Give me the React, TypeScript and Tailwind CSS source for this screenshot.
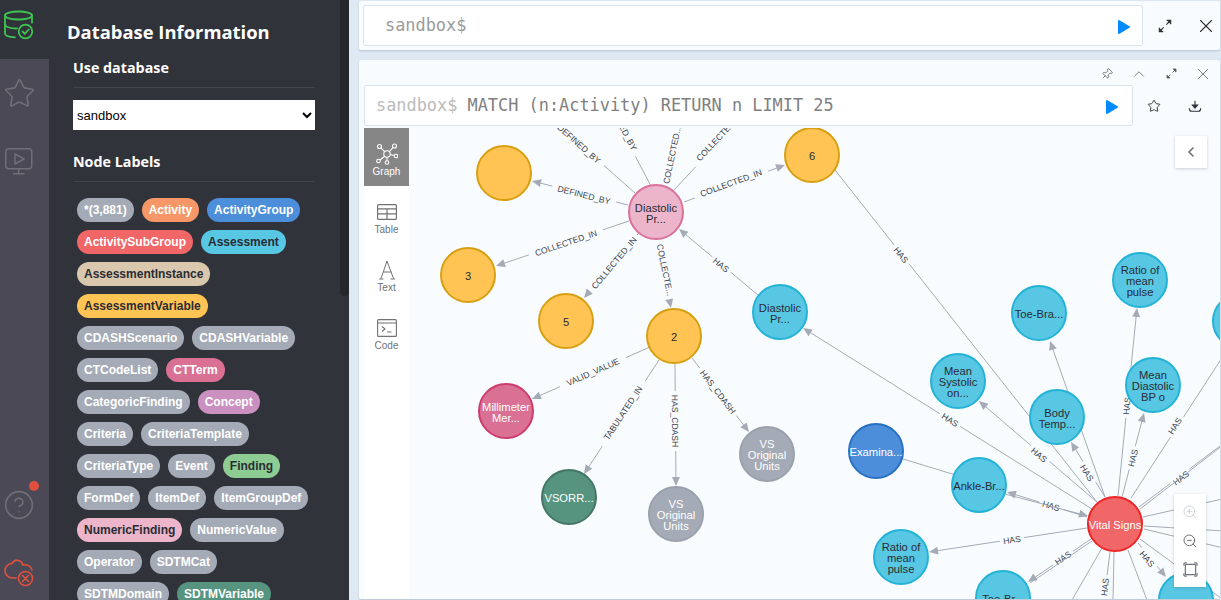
import { ChevronLeft, ChevronUp, CircleHelp, Pin, Star, X, ZoomIn, ZoomOut } from "lucide-react";

const GRAY = { bg: "bg-[#a5abb6]", text: "text-white" };

const TAGS = [
  { name: "*(3,881)", ...GRAY },
  { name: "Activity", bg: "bg-[#f79767]", text: "text-white" },
  { name: "ActivityGroup", bg: "bg-[#4c8eda]", text: "text-white" },
  { name: "ActivitySubGroup", bg: "bg-[#f16667]", text: "text-white" },
  { name: "Assessment", bg: "bg-[#57c7e3]", text: "text-[#2a2c34]" },
  { name: "AssessmentInstance", bg: "bg-[#d9c8ae]", text: "text-[#2a2c34]" },
  { name: "AssessmentVariable", bg: "bg-[#ffc454]", text: "text-[#2a2c34]" },
  { name: "CDASHScenario", ...GRAY },
  { name: "CDASHVariable", ...GRAY },
  { name: "CTCodeList", ...GRAY },
  { name: "CTTerm", bg: "bg-[#da7194]", text: "text-white" },
  { name: "CategoricFinding", ...GRAY },
  { name: "Concept", bg: "bg-[#c990c0]", text: "text-white" },
  { name: "Criteria", ...GRAY },
  { name: "CriteriaTemplate", ...GRAY },
  { name: "CriteriaType", ...GRAY },
  { name: "Event", ...GRAY },
  { name: "Finding", bg: "bg-[#8dcc93]", text: "text-[#2a2c34]" },
  { name: "FormDef", ...GRAY },
  { name: "ItemDef", ...GRAY },
  { name: "ItemGroupDef", ...GRAY },
  { name: "NumericFinding", bg: "bg-[#ecb5c9]", text: "text-[#2a2c34]" },
  { name: "NumericValue", ...GRAY },
  { name: "Operator", ...GRAY },
  { name: "SDTMCat", ...GRAY },
  { name: "SDTMDomain", ...GRAY },
  { name: "SDTMVariable", bg: "bg-[#569480]", text: "text-white" },
];

const KINDS = {
  orange: { fill: "#ffc454", stroke: "#d7a013", text: "#2a2c34" },
  blue: { fill: "#57c7e3", stroke: "#23b3d7", text: "#2a2c34" },
  pink: { fill: "#ecb5c9", stroke: "#da7298", text: "#2a2c34" },
  rose: { fill: "#da7194", stroke: "#cc3c6c", text: "#ffffff" },
  green: { fill: "#569480", stroke: "#447666", text: "#ffffff" },
  gray: { fill: "#a5abb6", stroke: "#9aa1ac", text: "#ffffff" },
  red: { fill: "#f16667", stroke: "#eb2728", text: "#ffffff" },
  royal: { fill: "#4c8eda", stroke: "#2870c2", text: "#ffffff" },
};

type Kind = keyof typeof KINDS;

const NODES: { x: number; y: number; kind: Kind; lines: string[] }[] = [
  { x: 504, y: 173, kind: "orange", lines: [] },
  { x: 468, y: 275, kind: "orange", lines: ["3"] },
  { x: 566, y: 321, kind: "orange", lines: ["5"] },
  { x: 812, y: 155, kind: "orange", lines: ["6"] },
  { x: 674, y: 336, kind: "orange", lines: ["2"] },
  { x: 656, y: 212, kind: "pink", lines: ["Diastolic", "Pr..."] },
  { x: 780, y: 312, kind: "blue", lines: ["Diastolic", "Pr..."] },
  { x: 506, y: 411, kind: "rose", lines: ["Millimeter", "Mer..."] },
  { x: 569, y: 497, kind: "green", lines: ["VSORR..."] },
  { x: 676, y: 514, kind: "gray", lines: ["VS", "Original", "Units"] },
  { x: 767, y: 454, kind: "gray", lines: ["VS", "Original", "Units"] },
  { x: 876, y: 451, kind: "royal", lines: ["Examina..."] },
  { x: 979, y: 485, kind: "blue", lines: ["Ankle-Br..."] },
  { x: 958, y: 381, kind: "blue", lines: ["Mean", "Systolic", "on..."] },
  { x: 1057, y: 417, kind: "blue", lines: ["Body", "Temp..."] },
  { x: 1039, y: 313, kind: "blue", lines: ["Toe-Bra..."] },
  { x: 1140, y: 280, kind: "blue", lines: ["Ratio of", "mean", "pulse"] },
  { x: 1153, y: 385, kind: "blue", lines: ["Mean", "Diastolic", "BP o"] },
  { x: 901, y: 557, kind: "blue", lines: ["Ratio of", "mean", "pulse"] },
  { x: 1003, y: 598, kind: "blue", lines: ["Toe-Br..."] },
  { x: 1186, y: 600, kind: "blue", lines: [] },
  { x: 1240, y: 321, kind: "blue", lines: [] },
  { x: 1115, y: 524, kind: "red", lines: ["Vital Signs"] },
];

// a -> b in page pixels, l is the centre of the caption
type Edge = { a: number[]; b: number[]; arrow?: boolean; label?: string; l?: number[] };

const EDGES: Edge[] = [
  { a: [628, 205], b: [532, 181], arrow: true, label: "DEFINED_BY", l: [584, 195] },
  { a: [629, 221], b: [496, 266], arrow: true, label: "COLLECTED_IN", l: [566, 243] },
  { a: [637, 235], b: [584, 298], arrow: true, label: "COLLECTED_IN", l: [614, 263] },
  { a: [657, 240], b: [671, 308], arrow: true, label: "COLLECTE...", l: [665, 270] },
  { a: [684, 202], b: [785, 165], arrow: true, label: "COLLECTED_IN", l: [731, 183] },
  { a: [635, 193], b: [530, 100], label: "DEFINED_BY", l: [579, 144] },
  { a: [651, 186], b: [579, 50], label: "DEFINED_BY", l: [622, 126] },
  { a: [662, 185], b: [690, 50], label: "COLLECTED...", l: [672, 155] },
  { a: [674, 190], b: [774, 83], label: "COLLECTED_IN", l: [720, 136] },
  { a: [758, 295], b: [679, 229], arrow: true, label: "HAS", l: [721, 265] },
  { a: [650, 347], b: [532, 399], arrow: true, label: "VALID_VALUE", l: [593, 372] },
  { a: [659, 360], b: [584, 474], arrow: true, label: "TABULATED_IN", l: [623, 413] },
  { a: [675, 364], b: [676, 486], arrow: true, label: "HAS_CDASH", l: [675, 421] },
  { a: [692, 358], b: [749, 432], arrow: true, label: "HAS_CDASH", l: [718, 392] },
  { a: [1092, 509], b: [803, 328], arrow: true, label: "HAS", l: [950, 420] },
  { a: [1097, 502], b: [835, 170], label: "HAS", l: [901, 255] },
  { a: [1098, 503], b: [979, 401], arrow: true, label: "HAS", l: [1039, 455] },
  { a: [1105, 497], b: [1071, 442], arrow: true, label: "HAS", l: [1087, 473] },
  { a: [1105, 497], b: [1050, 341], arrow: true },
  { a: [1118, 496], b: [1137, 308], arrow: true, label: "HAS", l: [1127, 406] },
  { a: [1122, 497], b: [1144, 413], arrow: true, label: "HAS", l: [1133, 458] },
  { a: [1131, 498], b: [1240, 330], label: "HAS", l: [1175, 426] },
  { a: [1139, 507], b: [1240, 431], label: "HAS", l: [1181, 478] },
  { a: [1140, 509], b: [1240, 432] },
  { a: [1143, 517], b: [1240, 495] },
  { a: [1144, 526], b: [1240, 532] },
  { a: [1144, 529], b: [1240, 552] },
  { a: [1140, 539], b: [1240, 612] },
  { a: [1138, 543], b: [1166, 577], arrow: true, label: "HAS", l: [1147, 559] },
  { a: [1128, 550], b: [1147, 600] },
  { a: [1114, 552], b: [1113, 600] },
  { a: [1110, 552], b: [1104, 600], label: "HAS", l: [1105, 587] },
  { a: [1102, 548], b: [1072, 600] },
  { a: [1091, 539], b: [1028, 582], arrow: true, label: "HAS", l: [1063, 558] },
  { a: [1092, 541], b: [1030, 583] },
  { a: [1087, 528], b: [929, 552], arrow: true, label: "HAS", l: [1012, 540] },
  { a: [1087, 517], b: [1007, 492], arrow: true, label: "HAS", l: [1051, 506] },
  { a: [1005, 494], b: [1088, 516], arrow: true },
  { a: [903, 459], b: [1005, 490] },
];

function GraphEdge({ edge }: { edge: Edge }) {
  const [ax, ay] = edge.a;
  const [bx, by] = edge.b;
  const len = Math.hypot(bx - ax, by - ay);
  const ux = (bx - ax) / len;
  const uy = (by - ay) / len;
  const ex = edge.arrow ? bx - ux * 6 : bx;
  const ey = edge.arrow ? by - uy * 6 : by;
  const head = `${bx},${by} ${bx - ux * 9 - uy * 4},${by - uy * 9 + ux * 4} ${bx - ux * 9 + uy * 4},${by - uy * 9 - ux * 4}`;

  if (!edge.label || !edge.l) {
    return (
      <g>
        <line x1={ax} y1={ay} x2={ex} y2={ey} stroke="#a5abb6" />
        {edge.arrow && <polygon points={head} fill="#a5abb6" />}
      </g>
    );
  }

  const [lx, ly] = edge.l;
  const half = edge.label.length * 3 + 3;
  const t = (lx - ax) * ux + (ly - ay) * uy;
  let angle = (Math.atan2(uy, ux) * 180) / Math.PI;
  if (angle > 90) angle -= 180;
  if (angle < -90) angle += 180;

  return (
    <g>
      <line x1={ax} y1={ay} x2={ax + ux * (t - half)} y2={ay + uy * (t - half)} stroke="#a5abb6" />
      <line x1={ax + ux * (t + half)} y1={ay + uy * (t + half)} x2={ex} y2={ey} stroke="#a5abb6" />
      {edge.arrow && <polygon points={head} fill="#a5abb6" />}
      <text
        x={lx}
        y={ly + 3}
        textAnchor="middle"
        fill="#3c3f49"
        transform={`rotate(${angle} ${lx} ${ly})`}
        className="font-['Liberation_Sans'] text-[8.6px]"
      >
        {edge.label}
      </text>
    </g>
  );
}

function GraphCanvas() {
  return (
    <svg viewBox="409 128 811 471" className="block h-full w-full">
      {EDGES.map((e, i) => (
        <GraphEdge key={i} edge={e} />
      ))}
      {NODES.map((n, i) => {
        const k = KINDS[n.kind];
        const first = n.y + 5 - (n.lines.length - 1) * 5.5;
        return (
          <g key={i}>
            <circle cx={n.x} cy={n.y} r={27} fill={k.fill} stroke={k.stroke} strokeWidth={2} />
            {n.lines.map((line, j) => (
              <text
                key={j}
                x={n.x}
                y={first + j * 11}
                textAnchor="middle"
                fill={k.text}
                className="font-['Liberation_Sans'] text-[11.2px]"
              >
                {line}
              </text>
            ))}
          </g>
        );
      })}
    </svg>
  );
}

function PlayIcon() {
  return (
    <svg viewBox="0 0 12 14" className="mt-[3px] h-[14px] w-[12px]">
      <polygon points="1,1 11,7 1,13" fill="#018bff" stroke="#018bff" strokeWidth="2" strokeLinejoin="round" />
    </svg>
  );
}

function ExpandIcon({ size, color }: { size: number; color: string }) {
  return (
    <svg viewBox="0 0 16 16" width={size} height={size} fill="none" stroke={color} strokeWidth="1.3">
      <path d="M9.5 6.5 14 2" />
      <path d="M10 1.5h4.5V6" fill={color} />
      <path d="M6.5 9.5 2 14" />
      <path d="M1.5 10v4.5H6" fill={color} />
    </svg>
  );
}

function DownloadIcon() {
  return (
    <svg viewBox="0 0 16 16" width={14} height={14} fill="none" stroke="#31333b" strokeWidth="1.3">
      <path d="M8 2v7" />
      <path d="M5 7h6l-3 3.5z" fill="#31333b" />
      <path d="M1.5 10.5c0 2.5 1 3.5 2.5 3.5h8c1.5 0 2.5-1 2.5-3.5" />
    </svg>
  );
}

function DatabaseCheckIcon() {
  return (
    <svg viewBox="0 0 30 30" width={30} height={30} fill="none" stroke="#3dc551" strokeWidth="1.8" strokeLinecap="round">
      <ellipse cx="14.500" cy="5.500" rx="13.500" ry="4" />
      <path d="M1 5.500v18c0 2 4 3.500 10 3.800" />
      <path d="M1 14.500c0 2 4.500 4 12 4" />
      <path d="M28 5.500v7" />
      <circle cx="21.500" cy="21.500" r="6.800" />
      <path d="m18.500 21.500 2.200 2.400 4-4.400" />
    </svg>
  );
}

function MonitorIcon() {
  return (
    <svg viewBox="0 0 28 27" width={28} height={27} fill="none" stroke="#6f6f78" strokeWidth="1.500" strokeLinejoin="round">
      <rect x="0.750" y="0.750" width="26" height="20" rx="3" />
      <path d="m10 6 9 5-9 5z" />
      <path d="M13.700 21v4.500M8 25.700h11.500" />
    </svg>
  );
}

function CloudErrorIcon() {
  return (
    <svg viewBox="0 0 30 30" width={30} height={30} fill="none" stroke="#e0503f" strokeWidth="1.6" strokeLinecap="round">
      <path d="M12 20H8.500C4.500 20 1 17 1 12.500 1 8.500 4.500 5.500 8 5.500c1.500-2.500 4-4 6.500-3 2.500.8 4 2.500 4.500 4.500 4-1 8 1 9 5" />
      <circle cx="21.500" cy="20.500" r="7" />
      <path d="m18.500 17.500 6 6M24.500 17.500l-6 6" />
    </svg>
  );
}

function GraphTabIcon() {
  return (
    <svg viewBox="0 0 22 22" width={22} height={22} fill="none" stroke="#ffffff" strokeWidth="1.1">
      <circle cx="11" cy="11" r="3.200" />
      <circle cx="3.500" cy="3.500" r="2" />
      <circle cx="18.500" cy="3" r="2" />
      <circle cx="20" cy="13" r="1.800" />
      <circle cx="2.500" cy="18" r="1.800" />
      <circle cx="11" cy="19.500" r="1.800" />
      <path d="m5 5 3.700 3.700M17 4.500l-3.800 4.300M14.200 11.500l4 1M8.700 13.200 4 17M11 14.200v3.500" />
    </svg>
  );
}

function TableTabIcon() {
  return (
    <svg viewBox="0 0 20 16" width={20} height={16} fill="none" stroke="#717172" strokeWidth="1.200">
      <rect x="0.600" y="0.600" width="18.800" height="14.800" rx="1" />
      <path d="M.600 4.800h18.800M.600 9.800h18.800M10 4.800v10.600" />
    </svg>
  );
}

function TextTabIcon() {
  return (
    <svg viewBox="0 0 18 20" width={18} height={20} fill="none" stroke="#717172" strokeWidth="1">
      <path d="M9 1 3 18.500M9 1l6.500 17.500M5.500 12h7.800M1 19h4.500M12.500 19H17" />
    </svg>
  );
}

function CodeTabIcon() {
  return (
    <svg viewBox="0 0 20 18" width={20} height={18} fill="none" stroke="#717172" strokeWidth="1.100">
      <rect x="0.600" y="0.600" width="18.800" height="16.800" rx="1" />
      <path d="M.600 4h18.800M5 7.500l3 2.500-3 2.500M10 13h4.500" />
    </svg>
  );
}

function FitIcon() {
  return (
    <svg viewBox="0 0 16 16" width={15} height={15} fill="none" stroke="#6f7279" strokeWidth="1.300">
      <rect x="2.500" y="2.500" width="11" height="11" rx="1" />
      <path d="M1 4V2.200C1 1.500 1.500 1 2.200 1H4M12 1h1.800c.7 0 1.200.5 1.200 1.200V4M15 12v1.800c0 .7-.5 1.200-1.200 1.200H12M4 15H2.200C1.500 15 1 14.500 1 13.800V12" />
    </svg>
  );
}

function SideNav() {
  return (
    <nav className="flex w-[49px] shrink-0 flex-col bg-[#4a4955]">
      <div className="flex h-[59px] items-start bg-[#31333b] pl-[4px] pt-[10px]">
        <DatabaseCheckIcon />
      </div>
      <div className="flex h-[65px] items-center pl-[3px] pt-[3px]">
        <Star size={33} strokeWidth={1.200} className="text-[#6f6f78]" />
      </div>
      <div className="flex h-[65px] items-start pl-[5px] pt-[24px]">
        <MonitorIcon />
      </div>
      <div className="flex-1" />
      <div className="relative flex h-[62px] items-center pl-[3px] pt-[2px]">
        <CircleHelp size={32} strokeWidth={1.200} className="text-[#6f6f78]" />
        <span className="absolute left-[29px] top-[8px] h-[10px] w-[10px] rounded-full bg-[#e0503f]" />
      </div>
      <div className="flex h-[65px] items-start pl-[4px] pt-[23px]">
        <CloudErrorIcon />
      </div>
    </nav>
  );
}

function Drawer() {
  return (
    <aside className="flex w-[300px] shrink-0 bg-[#31333b]">
      <div className="w-[291px] overflow-hidden pl-[18px] pt-[19px] text-white">
        <h2 className="font-['Open_Sans'] text-[18.400px] font-bold leading-[26px]">Database Information</h2>
        <h3 className="ml-[6px] mt-[13px] font-['Open_Sans'] text-[14.300px] font-bold leading-[20px]">Use database</h3>
        <div className="ml-[6px] mt-[9px] w-[242px] border-t border-[#43454d]" />
        <select className="ml-[6px] mt-[12px] block h-[30px] w-[242px] bg-white font-['Liberation_Sans'] text-[13px] text-black">
          <option>sandbox</option>
        </select>
        <h3 className="ml-[6px] mt-[22px] font-['Open_Sans'] text-[14.300px] font-bold leading-[20px]">Node Labels</h3>
        <div className="ml-[6px] mt-[9px] w-[242px] border-t border-[#43454d]" />
        <div className="ml-[10px] mt-[16px] flex w-[238px] flex-wrap gap-2">
          {TAGS.map((t) => (
            <span
              key={t.name}
              className={`h-[24px] rounded-full px-[7px] font-['Liberation_Sans'] text-[12px] font-bold leading-[24px] ${t.bg} ${t.text}`}
            >
              {t.name}
            </span>
          ))}
        </div>
      </div>
      <div className="w-[9px]">
        <div className="h-[296px] rounded-b-[4px] bg-[#26272d]" />
      </div>
    </aside>
  );
}

function TopEditor() {
  return (
    <div className="flex h-[49px] shrink-0 items-center rounded-[2px] bg-[#f9fcff] pl-[4px] shadow-[0_1px_2px_rgba(60,80,100,0.25)]">
      <div className="flex h-[41px] w-[780px] items-center rounded-[2px] border border-[#d9e4ee] bg-white pl-[21px] pr-[12px]">
        <span className="flex-1 font-['DejaVu_Sans_Mono'] text-[16.900px] text-[#9b9b9b]">sandbox$</span>
        <PlayIcon />
      </div>
      <div className="ml-[15px]">
        <ExpandIcon size={14} color="#31333b" />
      </div>
      <X size={22} strokeWidth={1.200} className="ml-[23px] text-[#31333b]" />
    </div>
  );
}

function SideTab({ label, active, icon }: { label: string; active?: boolean; icon: React.ReactNode }) {
  return (
    <div
      className={`flex h-[58px] flex-col items-center pt-[14px] font-['Liberation_Sans'] text-[10px] leading-[12px] ${
        active ? "bg-[#868686] text-white" : "bg-white text-[#717172]"
      }`}
    >
      <div className="flex h-[23px] items-center">{icon}</div>
      <span className="mt-px">{label}</span>
    </div>
  );
}

function ResultFrame() {
  return (
    <div className="flex min-h-0 flex-1 flex-col rounded-[2px] bg-[#f9fcff] shadow-[0_1px_2px_rgba(60,80,100,0.25)]">
      <div className="flex h-[25px] shrink-0 items-center justify-end pr-px pt-[2px] text-[#55575f]">
        <div className="flex w-[32px] justify-center">
          <Pin size={12} strokeWidth={1.500} className="rotate-45" />
        </div>
        <div className="flex w-[32px] justify-center">
          <ChevronUp size={18} strokeWidth={1} />
        </div>
        <div className="flex w-[32px] justify-center">
          <ExpandIcon size={11} color="#55575f" />
        </div>
        <div className="flex w-[32px] justify-center">
          <X size={18} strokeWidth={1} />
        </div>
      </div>
      <div className="flex h-[41px] shrink-0 items-center pl-[5px]">
        <div className="flex h-[41px] w-[769px] items-center rounded-[2px] border border-[#d9e4ee] bg-white pl-[11px] pr-[14px]">
          <span className="flex-1 font-['DejaVu_Sans_Mono'] text-[16.900px] text-[#808080]">
            <span className="text-[#bbbbbb]">sandbox$</span> MATCH (n:Activity) RETURN n LIMIT 25
          </span>
          <PlayIcon />
        </div>
        <Star size={14} strokeWidth={1.600} className="ml-[14px] text-[#31333b]" />
        <div className="ml-[27px]">
          <DownloadIcon />
        </div>
      </div>
      <div className="mt-[2px] flex min-h-0 flex-1">
        <div className="ml-[5px] w-[45px] shrink-0 bg-white">
          <SideTab label="Graph" active icon={<GraphTabIcon />} />
          <SideTab label="Table" icon={<TableTabIcon />} />
          <SideTab label="Text" icon={<TextTabIcon />} />
          <SideTab label="Code" icon={<CodeTabIcon />} />
        </div>
        <div className="relative min-w-0 flex-1 overflow-hidden">
          <GraphCanvas />
          <button className="absolute right-[13px] top-[8px] flex h-[32px] w-[32px] items-center justify-center bg-white text-[#717172] shadow-[0_1px_3px_rgba(60,80,100,0.25)]">
            <ChevronLeft size={16} strokeWidth={2.500} />
          </button>
          <div className="absolute bottom-[12px] right-[14px] flex h-[93px] w-[32px] flex-col items-center justify-around bg-white py-[3px] shadow-[0_1px_3px_rgba(60,80,100,0.25)]">
            <ZoomIn size={16} strokeWidth={1.300} className="text-[#c9ccd2]" />
            <ZoomOut size={16} strokeWidth={1.300} className="text-[#55575f]" />
            <FitIcon />
          </div>
        </div>
      </div>
    </div>
  );
}

export default function App() {
  return (
    <div className="flex h-[600px] w-[1221px] overflow-hidden">
      <SideNav />
      <Drawer />
      <main className="flex min-w-0 flex-1 flex-col gap-[10px] bg-[#dfe9f3] pb-px pl-[10px] pr-px pt-px">
        <TopEditor />
        <ResultFrame />
      </main>
    </div>
  );
}
